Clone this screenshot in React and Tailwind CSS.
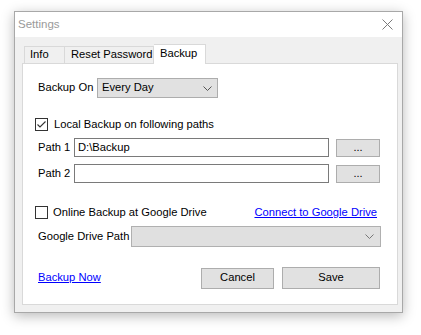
import React from "react";

function Chevron({ color = "#444" }) {
  return (
    <svg width="9" height="5" viewBox="0 0 9 5" className="shrink-0">
      <polyline points="0.5,0.5 4.5,4.5 8.5,0.5" fill="none" stroke={color} strokeWidth="1" />
    </svg>
  );
}

function Checkbox({ checked }) {
  return (
    <div className="w-[13px] h-[13px] border border-[#333] bg-white flex items-center justify-center shrink-0">
      {checked && (
        <svg width="11" height="11" viewBox="0 0 11 11">
          <polyline points="1.5,5.5 4,8 9.5,2.5" fill="none" stroke="#333" strokeWidth="1.1" />
        </svg>
      )}
    </div>
  );
}

export default function App() {
  return (
    <div
      className="w-[421px] h-[335px] bg-white pl-[14px] pt-[11px] text-[11.2px] text-black leading-none whitespace-nowrap"
      style={{ fontFamily: '"Segoe UI", "Liberation Sans", Arial, sans-serif' }}
    >
      <div className="w-[389px] h-[302px] border border-[#a8a8a8] bg-[#f0f0f0] flex flex-col shadow-[0_3px_12px_rgba(0,0,0,0.28)]">
        {/* title bar */}
        <div className="h-[25px] bg-white flex items-center justify-between pl-[3px] pr-[9px] shrink-0">
          <span className="text-[#9a9a9a] text-[11.5px]">Settings</span>
          <svg width="11" height="11" viewBox="0 0 11 11">
            <path d="M0.5 0.5 L10.5 10.5 M10.5 0.5 L0.5 10.5" stroke="#7a7a7a" strokeWidth="1" fill="none" />
          </svg>
        </div>
        {/* body */}
        <div className="flex-1 flex flex-col pl-[7px] pr-[4px] pt-[7px] pb-[7px]">
          {/* tabs */}
          <div className="h-[19px] flex items-end pl-[2px] shrink-0 relative z-10">
            <div className="h-[17px] w-[41px] border border-b-0 border-[#d9d9d9] bg-[#f0f0f0] flex items-center pl-[5px]">Info</div>
            <div className="h-[17px] w-[89px] border border-b-0 border-l-0 border-[#d9d9d9] bg-[#f0f0f0] flex items-center pl-[6px]">Reset Password</div>
            <div className="h-[20px] w-[52px] -mb-[1px] border border-b-0 border-l-0 border-[#d9d9d9] bg-white flex items-center pl-[6px] pb-[2px]">Backup</div>
          </div>
          {/* panel */}
          <div className="flex-1 bg-white border border-[#d9d9d9] flex flex-col pl-[12px]">
            {/* Backup On */}
            <div className="flex items-center h-[20px] mt-[14px]">
              <div className="w-[62px] pl-[3px]">Backup On</div>
              <div className="w-[121px] h-[20px] bg-[#e1e1e1] border border-[#adadad] flex items-center justify-between pl-[4px] pr-[5px]">
                <span>Every Day</span>
                <Chevron color="#555" />
              </div>
            </div>
            {/* Local backup */}
            <div className="flex items-center h-[13px] mt-[20px]">
              <Checkbox checked />
              <span className="ml-[6px]">Local Backup on following paths</span>
            </div>
            {/* Path 1 */}
            <div className="flex items-center h-[19px] mt-[7px]">
              <div className="w-[39px] pl-[3px]">Path 1</div>
              <div className="w-[255px] h-[19px] border border-[#7a7a7a] bg-white flex items-center pl-[3px]">D:\Backup</div>
              <div className="w-[44px] h-[18px] ml-[7px] bg-[#e1e1e1] border border-[#adadad] flex items-end justify-center pb-[3px] text-[11px]">...</div>
            </div>
            {/* Path 2 */}
            <div className="flex items-center h-[19px] mt-[7px]">
              <div className="w-[39px] pl-[3px]">Path 2</div>
              <div className="w-[255px] h-[19px] border border-[#7a7a7a] bg-white"></div>
              <div className="w-[44px] h-[18px] ml-[7px] bg-[#e1e1e1] border border-[#adadad] flex items-end justify-center pb-[3px] text-[11px]">...</div>
            </div>
            {/* Online backup */}
            <div className="flex items-center h-[13px] mt-[23px] w-[342px]">
              <Checkbox />
              <span className="ml-[5px]">Online Backup at Google Drive</span>
              <span className="ml-auto text-[#0000ff] underline">Connect to Google Drive</span>
            </div>
            {/* Google drive path */}
            <div className="flex items-center h-[21px] mt-[7px]">
              <div className="w-[96px] pl-[3px]">Google Drive Path</div>
              <div className="w-[250px] h-[21px] bg-[#e0e0e0] border border-[#b0b0b0] flex items-center justify-end pr-[6px]">
                <Chevron color="#777" />
              </div>
            </div>
            {/* buttons */}
            <div className="flex items-center h-[22px] mt-[20px] w-[345px]">
              <span className="ml-[3px] text-[#0000ff] underline">Backup Now</span>
              <div className="ml-auto w-[73px] h-[21px] bg-[#e1e1e1] border border-[#adadad] flex items-center justify-center">Cancel</div>
              <div className="ml-[8px] w-[98px] h-[22px] bg-[#e1e1e1] border border-[#adadad] flex items-center justify-center">Save</div>
            </div>
          </div>
        </div>
      </div>
    </div>
  );
}
